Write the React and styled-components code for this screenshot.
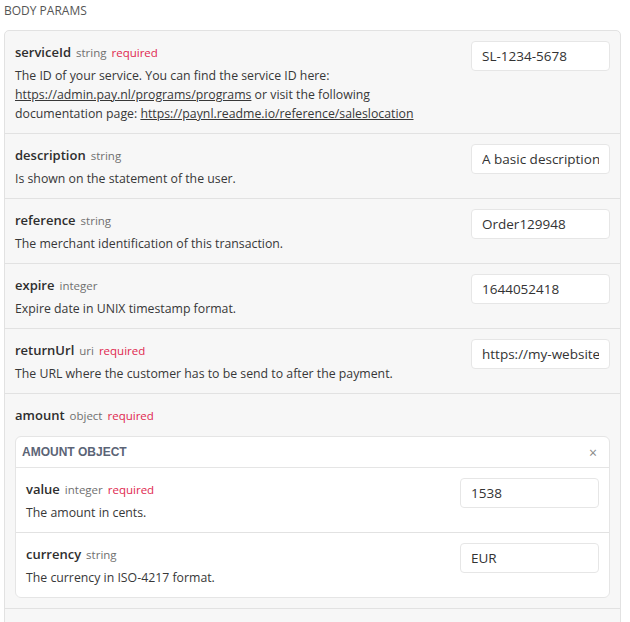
import React from "react";
import styled, { createGlobalStyle } from "styled-components";

const Global = createGlobalStyle`
  html, body { margin: 0; padding: 0; background: #fff; }
  body { font-family: "Open Sans", "Noto Sans", sans-serif; color: #333; }
`;

const Page = styled.div`
  padding: 0 9px 0 4px;
`;

const SectionTitle = styled.div`
  font-size: 12px;
  line-height: 22px;
  color: #555;
  text-transform: uppercase;
  margin-bottom: 8px;
`;

const ParamList = styled.div`
  background: #f7f7f7;
  border: 1px solid #e2e2e2;
  border-radius: 5px;
  overflow: hidden;
`;

const Row = styled.div`
  display: flex;
  gap: 12px;
  padding: 10px;
  border-top: ${(p) => (p.$first ? "none" : "1px solid #e2e2e2")};
  min-height: ${(p) => (p.$empty ? "20px" : "auto")};
`;

const Info = styled.div`
  flex: 1;
  min-width: 0;
`;

const NameLine = styled.div`
  display: flex;
  align-items: baseline;
  gap: 5px;
  height: 22px;
  line-height: 22px;
  overflow: visible;
  & > span { line-height: 22px; }
`;

const Name = styled.span`
  font-weight: 600;
  font-size: 13px;
  color: #2e2e2e;
`;

const Type = styled.span`
  font-size: 11.5px;
  color: #707070;
`;

const Required = styled.span`
  font-size: 11.5px;
  color: #e0284f;
`;

const Desc = styled.div`
  margin-top: 3px;
  font-size: 12.3px;
  line-height: 19px;
  color: #383838;
  a { color: inherit; text-decoration: underline; }
`;

const Input = styled.input`
  box-sizing: border-box;
  flex: none;
  width: 139px;
  height: 30px;
  padding: 0 10px;
  border: 1px solid #e6e6e6;
  border-radius: 4px;
  background: #fff;
  font-family: "Open Sans", "Noto Sans", sans-serif;
  font-size: 13.5px;
  color: #333;
  outline: none;
`;

const ObjectBox = styled.div`
  margin-top: 10px;
  background: #fff;
  border: 1px solid #e5e5e5;
  border-radius: 6px;
  overflow: hidden;
`;

const ObjectHeader = styled.div`
  display: flex;
  align-items: center;
  justify-content: space-between;
  height: 30px;
  padding: 0 12px 0 6px;
  font-family: "Liberation Sans", Arial, sans-serif;
  font-weight: 700;
  font-size: 12px;
  color: #5b6476;
  text-transform: uppercase;
  border-bottom: 1px solid #e5e5e5;
`;

const Close = styled.span`
  font-family: "Open Sans", sans-serif;
  font-weight: 400;
  font-size: 14px;
  color: #888;
`;

const params = [
  {
    name: "serviceId",
    type: "string",
    required: true,
    value: "SL-1234-5678",
    desc: (
      <>
        The ID of your service. You can find the service ID here:{" "}
        <a href="#">https://admin.pay.nl/programs/programs</a> or visit the following
        documentation page: <a href="#">https://paynl.readme.io/reference/saleslocation</a>
      </>
    ),
  },
  { name: "description", type: "string", value: "A basic description", desc: "Is shown on the statement of the user." },
  { name: "reference", type: "string", value: "Order129948", desc: "The merchant identification of this transaction." },
  { name: "expire", type: "integer", value: "1644052418", desc: "Expire date in UNIX timestamp format." },
  { name: "returnUrl", type: "uri", required: true, value: "https://my-website.com/return", desc: "The URL where the customer has to be send to after the payment." },
];

const amountFields = [
  { name: "value", type: "integer", required: true, value: "1538", desc: "The amount in cents." },
  { name: "currency", type: "string", value: "EUR", desc: "The currency in ISO-4217 format." },
];

function Param({ p, first }) {
  return (
    <Row $first={first}>
      <Info>
        <NameLine>
          <Name>{p.name}</Name>
          <Type>{p.type}</Type>
          {p.required && <Required>required</Required>}
        </NameLine>
        <Desc>{p.desc}</Desc>
      </Info>
      <Input defaultValue={p.value} />
    </Row>
  );
}

export default function App() {
  return (
    <Page>
      <Global />
      <SectionTitle>Body Params</SectionTitle>
      <ParamList>
        {params.map((p, i) => (
          <Param key={p.name} p={p} first={i === 0} />
        ))}
        <Row>
          <Info>
            <NameLine>
              <Name>amount</Name>
              <Type>object</Type>
              <Required>required</Required>
            </NameLine>
            <ObjectBox>
              <ObjectHeader>
                <span>Amount object</span>
                <Close>×</Close>
              </ObjectHeader>
              {amountFields.map((p, i) => (
                <Param key={p.name} p={p} first={i === 0} />
              ))}
            </ObjectBox>
          </Info>
        </Row>
        <Row $empty />
      </ParamList>
    </Page>
  );
}
